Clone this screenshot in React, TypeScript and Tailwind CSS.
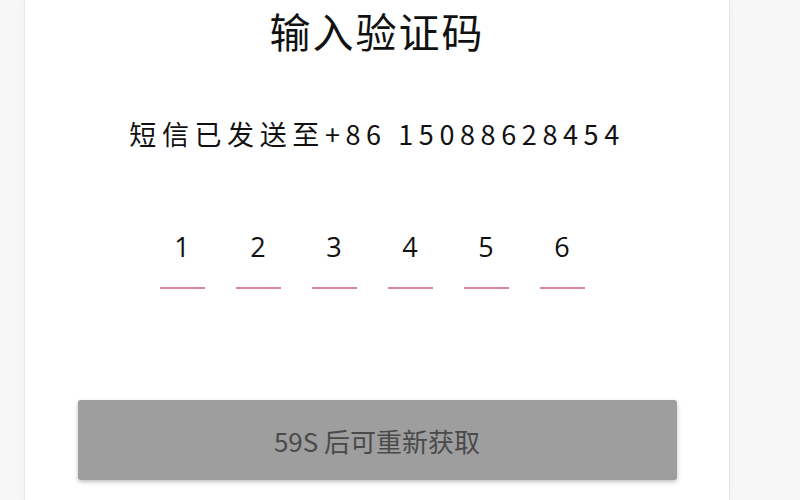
const digits = ["1", "2", "3", "4", "5", "6"];

export default function App() {
  return (
    <div
      className="flex h-[500px] w-[800px] overflow-hidden bg-[#f7f7f7]"
      style={{ fontFamily: '"Noto Sans CJK SC", "Noto Sans", sans-serif' }}
    >
      <div className="ml-[24px] flex w-[706px] flex-col items-center border-x border-[#e6e6e6] bg-white shadow-[0_0_8px_rgba(0,0,0,0.04)]">
        <h1 className="text-[41px] leading-[60px] tracking-[2px] text-[#111]">
          输入验证码
        </h1>

        <p className="mt-[54px] text-[27px] leading-[40px] tracking-[5.6px] text-[#111]">
          短信已发送至+86 15088628454
        </p>

        <div className="mr-[10px] mt-[75px] flex gap-[31px]">
          {digits.map((d) => (
            <div key={d} className="flex w-[45px] flex-col items-center">
              <span
                className="text-[27px] leading-[36px] text-[#111]"
                style={{ fontFamily: '"Open Sans", sans-serif' }}
              >
                {d}
              </span>
              <span className="mt-[22px] h-[2px] w-[45px] bg-[#d9869c]" />
            </div>
          ))}
        </div>

        <button className="mt-[111px] flex h-[80px] w-[599px] items-center justify-center rounded-[3px] bg-[#9e9e9e] text-[26px] text-[#4a4a4a] shadow-[0_2px_4px_rgba(0,0,0,0.25)]">
          59S 后可重新获取
        </button>
      </div>
    </div>
  );
}
